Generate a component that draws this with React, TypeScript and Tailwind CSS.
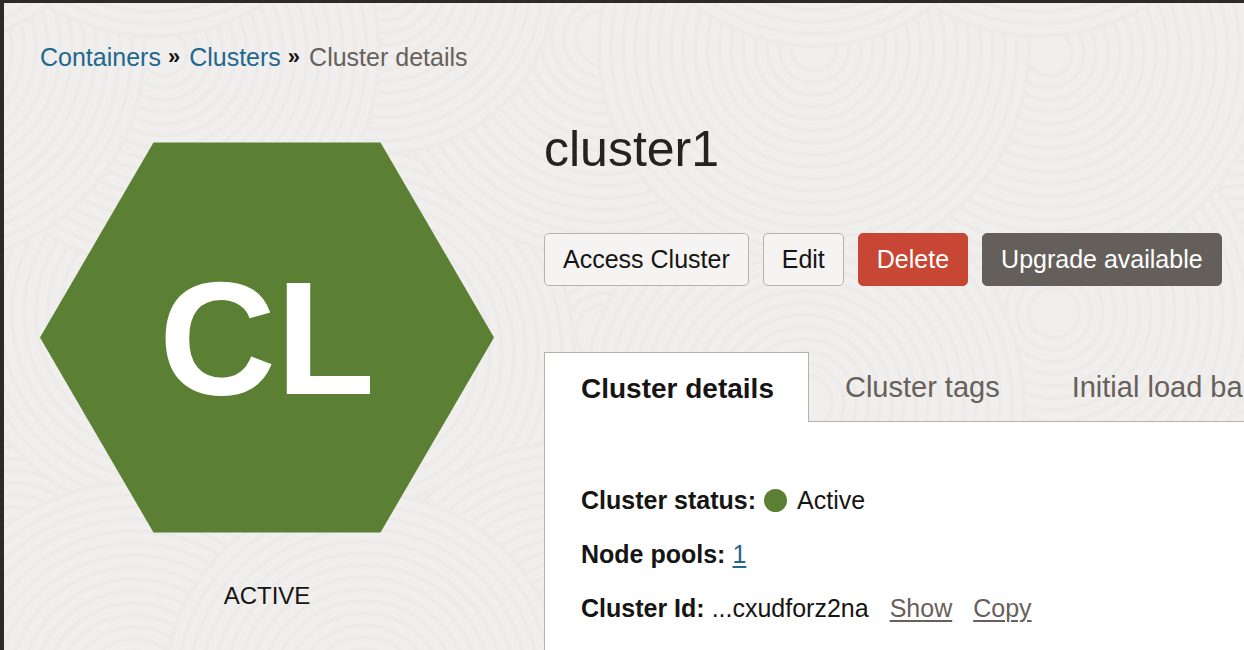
import React from "react";

type Disc = { x: number; y: number; r: number };

const TILE_WIDTH = 885;

// Listed back to front: each disc hides the rings of the ones behind it.
const DISCS: Disc[] = [
  { x: 10, y: 560, r: 200 },
  { x: 600, y: 330, r: 220 },
  { x: 355, y: 350, r: 215 },
  { x: 165, y: 310, r: 205 },
  { x: 800, y: 400, r: 220 },
  { x: 560, y: 640, r: 200 },
  { x: 130, y: 690, r: 210 },
  { x: 360, y: 690, r: 200 },
  { x: 600, y: 35, r: 220 },
  { x: 380, y: -20, r: 170 },
  { x: 160, y: 50, r: 215 },
  { x: -75, y: 45, r: 215 },
  { x: 150, y: -170, r: 203 },
  { x: -75, y: -150, r: 193 },
];

const RING_STEP = 12;

function Rings({ x, y, r }: Disc) {
  const radii: number[] = [];
  for (let radius = r; radius > 20; radius -= RING_STEP) radii.push(radius);
  return (
    <g fill="none" stroke="#ecebe9" strokeWidth="4">
      <circle cx={x} cy={y} r={r} fill="#f0efed" />
      {radii.map((radius) => (
        <circle key={radius} cx={x} cy={y} r={radius} />
      ))}
    </g>
  );
}

function Texture() {
  return (
    <svg aria-hidden="true" className="absolute inset-0 h-full w-full">
      {DISCS.map((disc, index) => (
        <g key={index}>
          {[0, 1, 2].map((n) => (
            <Rings key={n} x={disc.x + n * TILE_WIDTH} y={disc.y} r={disc.r} />
          ))}
        </g>
      ))}
    </svg>
  );
}

function Separator() {
  return (
    <span aria-hidden="true" className="mr-[9px] ml-[7px] text-[22px] leading-[30px] font-bold text-[#161513]">
      »
    </span>
  );
}

function Breadcrumbs() {
  return (
    <nav aria-label="Breadcrumb" className="flex items-center text-[25px] leading-[30px]">
      <a href="#containers" className="text-[#22678d]">Containers</a>
      <Separator />
      <a href="#clusters" className="text-[#22678d]">Clusters</a>
      <Separator />
      <span aria-current="page" className="text-[#67605b]">Cluster details</span>
    </nav>
  );
}

function StatusBadge() {
  return (
    <div className="flex w-[454px] shrink-0 flex-col items-center">
      <div className="grid w-full place-items-center">
        <svg viewBox="0 0 454 391" aria-hidden="true" className="col-start-1 row-start-1 w-full">
          <polygon points="0,195.5 113.5,0.5 340.5,0.5 454,195.5 340.5,390.5 113.5,390.5" fill="#5b8033" />
        </svg>
        <span className="col-start-1 row-start-1 text-[162px] leading-[188px] font-bold text-white">CL</span>
      </div>
      <p className="mt-12 text-[24px] leading-[30px]">ACTIVE</p>
    </div>
  );
}

const BUTTON = "h-[53px] shrink-0 cursor-pointer rounded-[5px] border px-[18px] pb-[2px] text-[25px] leading-[30px] whitespace-nowrap";

function Actions() {
  return (
    <div className="mt-14 flex gap-[14px]">
      <button type="button" className={`${BUTTON} border-[#b5b3b0] bg-[#f5f4f2] text-[#161513]`}>Access Cluster</button>
      <button type="button" className={`${BUTTON} border-[#b5b3b0] bg-[#f5f4f2] text-[#161513]`}>Edit</button>
      <button type="button" className={`${BUTTON} border-[#c74634] bg-[#c74634] text-white`}>Delete</button>
      <button type="button" className={`${BUTTON} border-[#655f5b] bg-[#655f5b] text-white`}>Upgrade available</button>
    </div>
  );
}

function DetailsPanel() {
  return (
    <section className="mt-[66px] flex flex-1 flex-col">
      <div role="tablist" aria-label="Cluster information" className="flex h-[70px] overflow-hidden">
        <button
          type="button"
          role="tab"
          id="tab-details"
          aria-selected="true"
          aria-controls="panel-details"
          className="shrink-0 border-x border-t border-[#b5b1ad] bg-white pt-[2px] pr-[34px] pl-9 text-[28px] leading-[34px] font-bold whitespace-nowrap"
        >
          Cluster details
        </button>
        <div className="flex flex-1 border-b border-[#b5b1ad] text-[29px] leading-[34px] text-[#67605b]">
          <button type="button" role="tab" aria-selected="false" className="shrink-0 px-9 whitespace-nowrap">
            Cluster tags
          </button>
          <button type="button" role="tab" aria-selected="false" className="shrink-0 pl-9 whitespace-nowrap">
            Initial load ba
          </button>
        </div>
      </div>
      <div
        role="tabpanel"
        id="panel-details"
        aria-labelledby="tab-details"
        className="flex-1 border-l border-[#b5b1ad] bg-white px-9 pt-[63px] text-[25px] leading-[30px]"
      >
        <dl className="flex flex-col gap-6">
          <div className="flex items-center">
            <dt className="font-bold">Cluster status:</dt>
            <dd className="ml-2 flex items-center gap-[10px]">
              <span aria-hidden="true" className="size-[23px] rounded-full bg-[#5b8033]" />
              Active
            </dd>
          </div>
          <div className="flex items-center gap-[7px]">
            <dt className="font-bold">Node pools:</dt>
            <dd>
              <a href="#node-pools" className="text-[#22678d] underline decoration-2 underline-offset-3">1</a>
            </dd>
          </div>
          <div className="flex items-center gap-[7px]">
            <dt className="font-bold">Cluster Id:</dt>
            <dd className="flex gap-[21px]">
              <span>...cxudforz2na</span>
              <a href="#show" className="text-[#67605b] underline decoration-2 underline-offset-3">Show</a>
              <a href="#copy" className="text-[#67605b] underline decoration-2 underline-offset-3">Copy</a>
            </dd>
          </div>
        </dl>
      </div>
    </section>
  );
}

export default function App() {
  return (
    <div className="relative isolate flex min-h-screen overflow-hidden border-t-[3px] border-l-4 border-[#2d2a28] bg-[#f0efed] font-['Liberation_Sans',Arial,sans-serif] text-[#161513]">
      <Texture />
      <div className="relative flex min-w-0 flex-1 flex-col pt-[39px] pl-9">
        <Breadcrumbs />
        <div className="flex flex-1 gap-[50px]">
          <div className="pt-[70px]">
            <StatusBadge />
          </div>
          <main className="flex min-w-0 flex-1 flex-col pt-[49px]">
            <h1 className="text-[50px] leading-[56px] text-[#252321]">cluster1</h1>
            <Actions />
            <DetailsPanel />
          </main>
        </div>
      </div>
    </div>
  );
}
